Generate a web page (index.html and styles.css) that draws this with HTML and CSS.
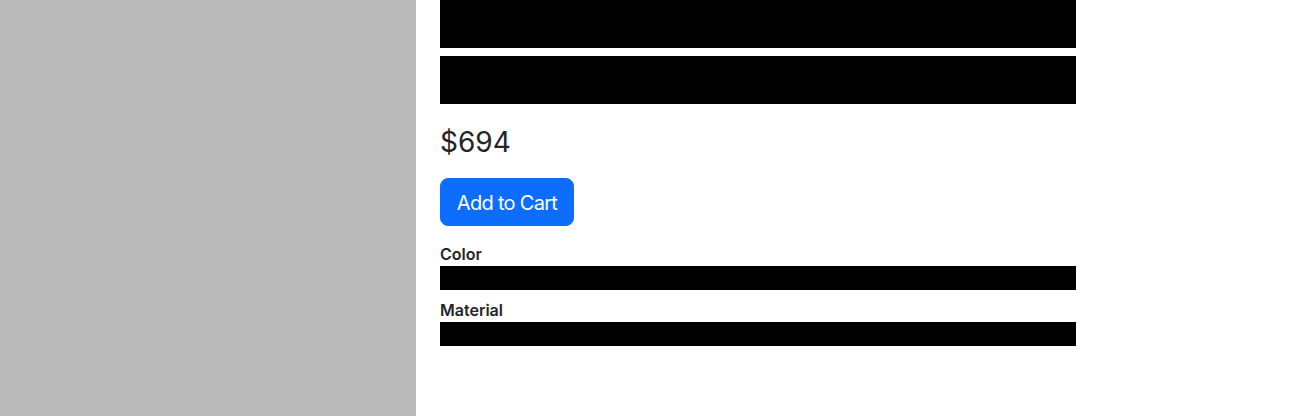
FILE: index.html
```html
<!DOCTYPE html>
<html>
<head>
<meta charset="utf-8">
<link rel="stylesheet" href="styles.css">
</head>
<body>
<div class="page">
  <div class="gallery"></div>
  <div class="details">
    <div class="bar bar-title"></div>
    <div class="bar bar-title second"></div>
    <div class="price">$694</div>
    <button class="btn-cart">Add to Cart</button>
    <div class="option-label">Color</div>
    <div class="bar bar-option"></div>
    <div class="option-label second">Material</div>
    <div class="bar bar-option"></div>
  </div>
</div>
</body>
</html>
```

FILE: styles.css
```css
html, body {
  margin: 0;
  padding: 0;
  background: #fff;
}
body {
  font-family: Inter, "Liberation Sans", sans-serif;
  color: #212529;
}
.page {
  display: flex;
  height: 416px;
  overflow: hidden;
}
.gallery {
  width: 416px;
  flex: 0 0 416px;
  background: #bbbbbb;
}
.details {
  padding: 0 24px;
  width: 636px;
  display: flex;
  flex-direction: column;
  align-items: flex-start;
}
.bar {
  background: #000;
  width: 636px;
}
.bar-title {
  height: 48px;
}
.bar-title.second {
  margin-top: 8px;
}
.price {
  margin-top: 21px;
  font-size: 28px;
  line-height: 34px;
  height: 34px;
  font-weight: 400;
}
.btn-cart {
  margin-top: 19px;
  height: 48px;
  width: 134px;
  padding: 2px 0 0;
  border: 1px solid #0d6efd;
  background: #0d6efd;
  color: #fff;
  border-radius: 8px;
  font-family: Inter, "Liberation Sans", sans-serif;
  font-size: 20px;
  line-height: 30px;
  letter-spacing: -0.7px;
  text-align: center;
  cursor: pointer;
}
.option-label {
  margin-top: 16px;
  font-size: 16px;
  line-height: 24px;
  font-weight: 600;
}
.option-label.second {
  margin-top: 8px;
}
.bar-option {
  height: 24px;
}
```
